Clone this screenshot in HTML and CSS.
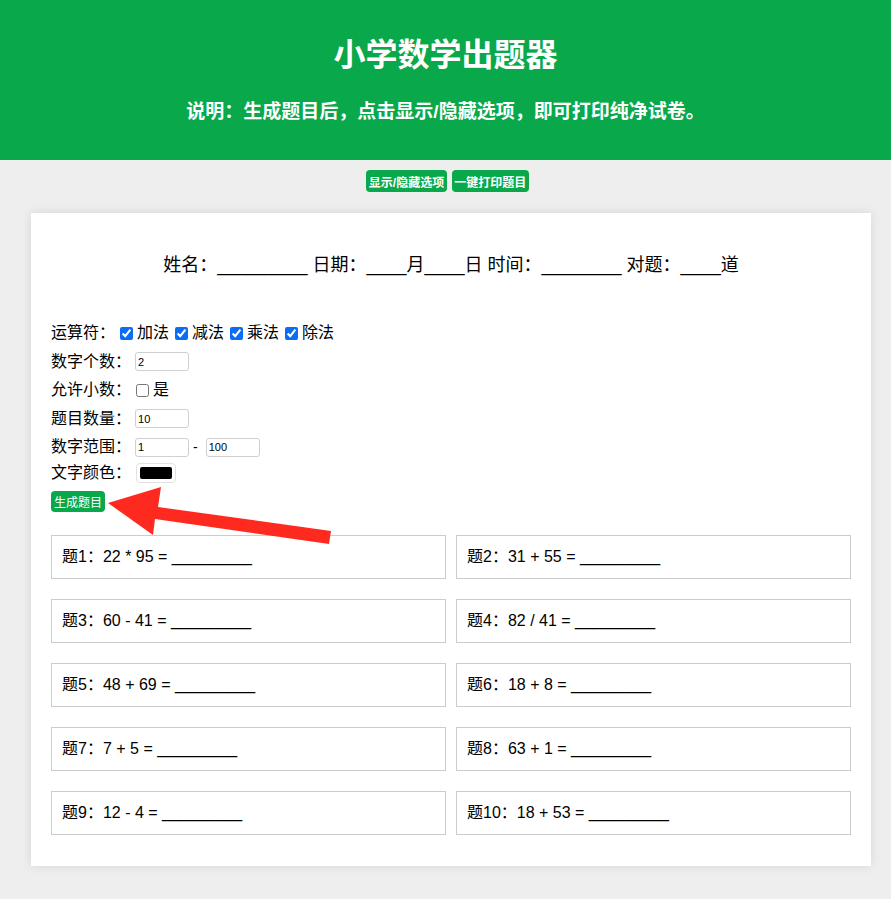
FILE: index.html
```html
<!DOCTYPE html>
<html lang="zh-CN">
<head>
    <meta charset="UTF-8">
    <meta name="viewport" content="width=device-width, initial-scale=1.0">
    <title>小学数学出题器</title>
    <link rel="stylesheet" href="styles.css">
</head>
<body>

<div class="header">
    <h1>小学数学出题器</h1>
    <p class="tip">说明：生成题目后，点击显示/隐藏选项，即可打印纯净试卷。</p>
</div>

<div class="toolbar">
    <button class="btn">显示/隐藏选项</button>
    <button class="btn">一键打印题目</button>
</div>

<div class="container">
    <p class="info">姓名：_________ 日期：____月____日 时间：________ 对题：____道</p>

    <div class="options">
        <div class="opt-row">
            运算符：
            <input type="checkbox" checked><span class="opt-text">加法</span>
            <input type="checkbox" checked><span class="opt-text">减法</span>
            <input type="checkbox" checked><span class="opt-text">乘法</span>
            <input type="checkbox" checked><span class="opt-text">除法</span>
        </div>
        <div class="opt-row">
            数字个数：<input type="number" class="num" value="2">
        </div>
        <div class="opt-row">
            允许小数：<input type="checkbox" class="decimal"><span class="opt-text">是</span>
        </div>
        <div class="opt-row">
            题目数量：<input type="number" class="num" value="10">
        </div>
        <div class="opt-row">
            数字范围：<input type="number" class="num" value="1"><span class="dash">-</span><input type="number" class="num" value="100">
        </div>
        <div class="opt-row color-row">
            文字颜色：<input type="color" class="color" value="#000000">
        </div>
        <button class="btn gen-btn">生成题目</button>
    </div>

    <div class="problems" id="problems"></div>
</div>

<svg class="arrow" width="891" height="899" viewBox="0 0 891 899">
    <polygon points="108,503 161,487 158,507 331,531 329,544 155,519 153,535" fill="#ff2a1f"/>
</svg>

<script>
    const problems = [
        '22 * 95', '31 + 55', '60 - 41', '82 / 41', '48 + 69',
        '18 + 8', '7 + 5', '63 + 1', '12 - 4', '18 + 53'
    ];
    const list = document.getElementById('problems');
    problems.forEach(function (p, i) {
        const div = document.createElement('div');
        div.className = 'problem';
        div.textContent = '题' + (i + 1) + '：' + p + ' = _________';
        list.appendChild(div);
    });
</script>

</body>
</html>
```

FILE: styles.css
```css
* {
    box-sizing: border-box;
}
body {
    margin: 0;
    font-family: "Liberation Sans", Arial, "Noto Sans CJK SC", sans-serif;
    background-color: #eeeeee;
    color: #000;
    position: relative;
}
.header {
    background-color: #09a84a;
    color: #fff;
    text-align: center;
    padding: 30px 0 35px;
}
.header h1 {
    margin: 0;
    font-size: 32px;
    line-height: 50px;
}
.header .tip {
    margin: 19px 0 0;
    font-size: 19px;
    font-weight: bold;
    line-height: 26px;
}
.toolbar {
    text-align: center;
    margin-top: 10px;
    font-size: 0;
    padding-left: 4px;
}
.btn {
    background-color: #09a84a;
    color: #fff;
    border: none;
    border-radius: 4px;
    font-family: inherit;
    font-size: 12px;
    font-weight: bold;
    height: 22px;
    padding: 0 2.5px;
    margin: 0 2.5px;
    cursor: pointer;
}
.container {
    width: 840px;
    margin: 21px 20px 34px 31px;
    background-color: #fff;
    padding: 20px 20px 31px;
    box-shadow: 0 0 10px rgba(0, 0, 0, 0.1);
}
.info {
    text-align: center;
    font-size: 18px;
    line-height: 26px;
    margin: 19px 0 0;
}
.options {
    margin-top: 43px;
    font-size: 16px;
}
.opt-row {
    height: 24px;
    line-height: 24px;
    margin-bottom: 4.5px;
    display: flex;
    align-items: center;
}
.opt-row input[type="checkbox"] {
    width: 13px;
    height: 13px;
    margin: 0 4px 0 5px;
    accent-color: #0b6cf5;
}
.opt-text {
    margin-right: 1px;
}
.num {
    width: 54px;
    height: 19px;
    margin-left: 4px;
    border: 1px solid #d0d0d0;
    border-radius: 3px;
    font-family: inherit;
    font-size: 11px;
    padding: 1px 2px;
}
.dash {
    margin: 0 4px;
    font-size: 14px;
}
.color-row {
    margin-top: -3px;
    margin-bottom: 6px;
}
.color {
    width: 40px;
    height: 20px;
    margin-left: 5px;
    padding: 3px;
    border: 1px solid #e2e2e2;
    border-radius: 4px;
    background-color: #fff;
}
.color::-webkit-color-swatch-wrapper {
    padding: 0;
}
.color::-webkit-color-swatch {
    border: none;
    border-radius: 2px;
}
.gen-btn {
    height: 21px;
    padding: 0 3px;
    margin: 0;
    font-weight: normal;
}
.problems {
    display: grid;
    grid-template-columns: 1fr 1fr;
    column-gap: 10px;
    row-gap: 20px;
    margin-top: 23px;
}
.problem {
    border: 1px solid #cccccc;
    padding: 10px;
    font-size: 16px;
    line-height: 22px;
}
.arrow {
    position: absolute;
    left: 0;
    top: 0;
    pointer-events: none;
}
```
